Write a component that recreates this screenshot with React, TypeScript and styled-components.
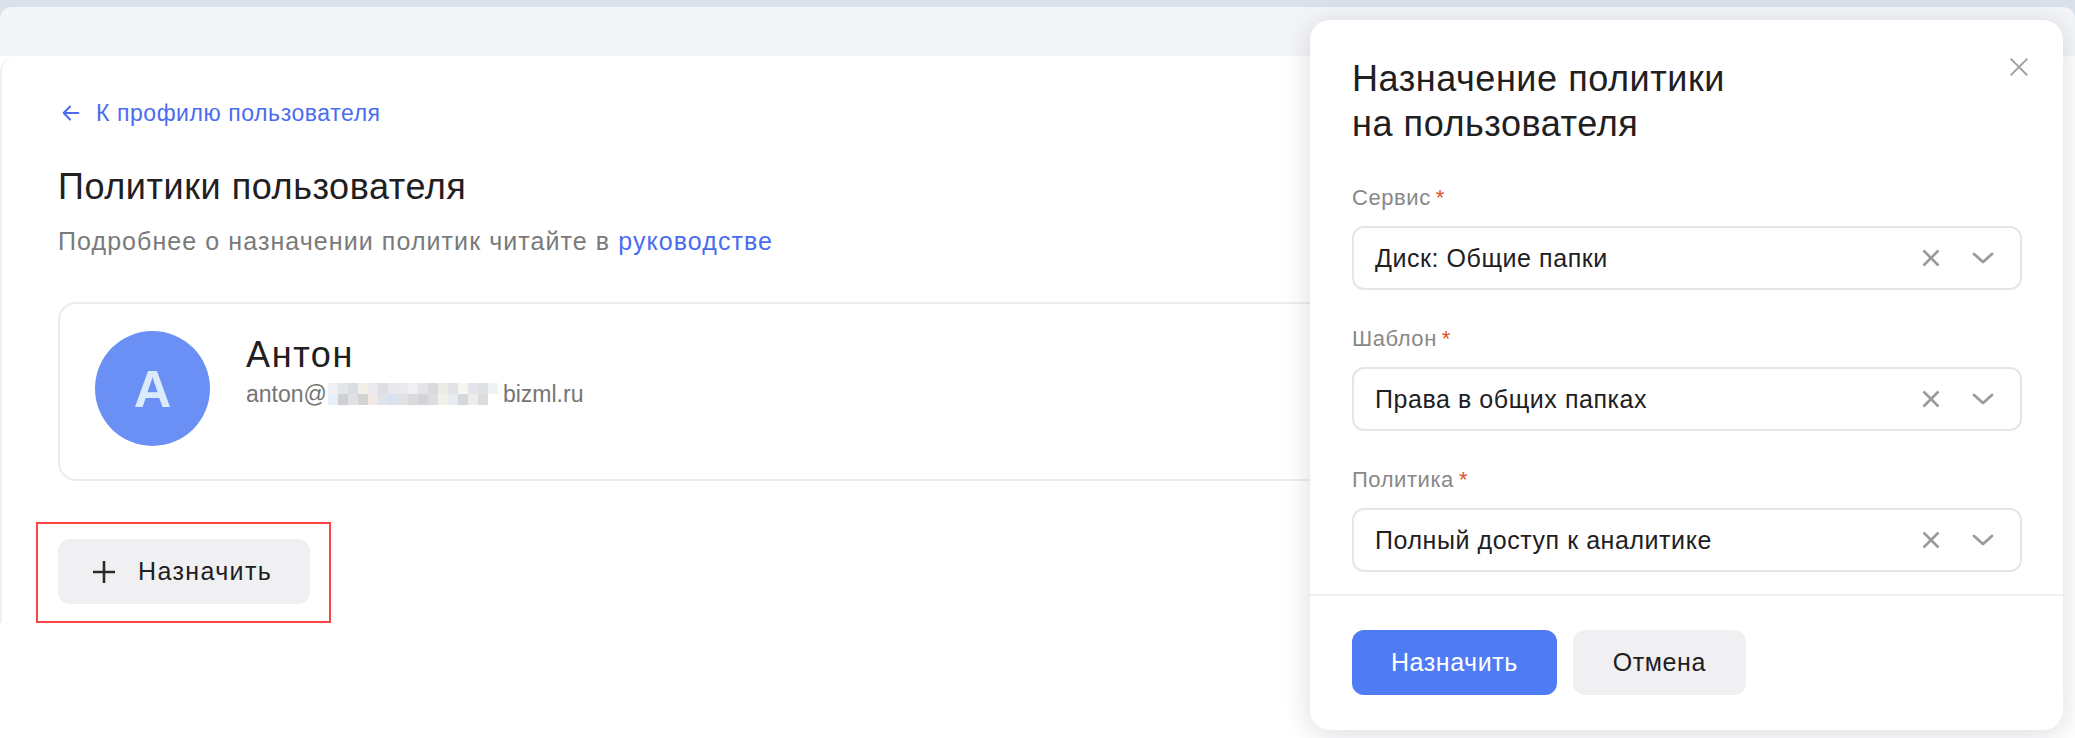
import React from "react";
import styled, { createGlobalStyle } from "styled-components";

const GlobalStyle = createGlobalStyle`
  html, body {
    margin: 0;
    padding: 0;
    background: #ffffff;
  }
  body {
    font-family: "Liberation Sans", Arial, sans-serif;
    letter-spacing: 0.035em;
    color: #21201f;
  }
  button {
    font-family: inherit;
    letter-spacing: inherit;
    cursor: pointer;
  }
`;

const Page = styled.div`
  position: relative;
  width: 2075px;
  height: 738px;
  overflow: hidden;
  background: #dbe1ea;
`;

const Shell = styled.div`
  margin-top: 7px;
  height: 731px;
  border-radius: 12px 12px 0 0;
  background: linear-gradient(#f4f5f8 0, #f4f5f8 49px, #ffffff 49px);
  padding-top: 49px;
  box-sizing: border-box;
`;

const Card = styled.div`
  height: 567px;
  background: #ffffff;
  border-radius: 16px 16px 0 0;
  border-left: 2px solid #f0f0f2;
  box-sizing: border-box;
  padding: 43px 0 0 56px;
  display: flex;
  flex-direction: column;
  align-items: flex-start;
`;

const BackLink = styled.a`
  display: flex;
  align-items: center;
  gap: 14px;
  color: #4a6cf0;
  font-size: 23px;
  line-height: 28px;
  text-decoration: none;
  margin-left: 2px;
`;

const Title = styled.h1`
  margin: 40px 0 0;
  font-size: 36px;
  line-height: 40px;
  font-weight: 400;
  color: #21201f;
`;

const Subtitle = styled.p`
  margin: 18px 0 0;
  font-size: 25px;
  line-height: 32px;
  letter-spacing: 0.043em;
  color: #7a7a7a;
`;

const Link = styled.span`
  color: #4a6cf0;
`;

const UserCard = styled.div`
  margin-top: 45px;
  width: 1400px;
  height: 182px;
  box-sizing: border-box;
  border: 2px solid #ececee;
  border-radius: 18px;
  display: flex;
  align-items: flex-start;
  padding: 27px 0 0 35px;
  gap: 36px;
`;

const Avatar = styled.div`
  width: 115px;
  height: 115px;
  border-radius: 50%;
  background: #6a8ff5;
  color: #dcebfb;
  font-weight: 700;
  font-size: 52px;
  letter-spacing: 0;
  display: flex;
  align-items: center;
  justify-content: center;
`;

const UserInfo = styled.div`
  display: flex;
  flex-direction: column;
  padding-top: 4px;
`;

const Name = styled.div`
  font-size: 36px;
  line-height: 40px;
  letter-spacing: 0.045em;
  color: #21201f;
`;

const Email = styled.div`
  display: flex;
  align-items: center;
  margin-top: 4px;
  font-size: 23px;
  line-height: 30px;
  letter-spacing: 0;
  color: #757575;
`;

const Mosaic = styled.span`
  display: grid;
  grid-template-columns: repeat(17, 10px);
  grid-template-rows: repeat(2, 11px);
  margin: 0 5px 0 1px;
`;

const Tile = styled.span<{ $c: string }>`
  background: ${(p) => p.$c};
`;

const Highlight = styled.div`
  margin: 41px 0 0 -22px;
  border: 2px solid #ff4444;
  padding: 15px 19px 17px 20px;
`;

const GhostButton = styled.button`
  display: flex;
  align-items: center;
  gap: 22px;
  height: 65px;
  padding: 0 38px 0 34px;
  border: none;
  border-radius: 12px;
  background: #f0f0f3;
  color: #21201f;
  font-size: 25px;
  letter-spacing: 0.055em;
`;

const Drawer = styled.div`
  position: absolute;
  top: 20px;
  right: 12px;
  width: 753px;
  height: 710px;
  background: #ffffff;
  border-radius: 20px;
  box-shadow: 0 4px 28px rgba(30, 40, 60, 0.16);
  display: flex;
  flex-direction: column;
`;

const DrawerBody = styled.div`
  flex: 1;
  padding: 36px 0 0 42px;
  position: relative;
`;

const DrawerTitle = styled.h2`
  margin: 0;
  font-size: 36px;
  line-height: 45px;
  font-weight: 400;
  color: #21201f;
`;

const CloseButton = styled.button`
  position: absolute;
  top: 27px;
  right: 24px;
  width: 40px;
  height: 40px;
  border: none;
  background: transparent;
  display: flex;
  align-items: center;
  justify-content: center;
  padding: 0;
`;

const Field = styled.div`
  margin-top: 39px;
  display: flex;
  flex-direction: column;
  width: 670px;
  & + & {
    margin-top: 36px;
  }
`;

const Label = styled.label`
  font-size: 22px;
  line-height: 26px;
  color: #888888;
`;

const Star = styled.span`
  color: #e0522c;
  margin-left: 5px;
`;

const Select = styled.div`
  margin-top: 15px;
  height: 64px;
  box-sizing: border-box;
  border: 2px solid #e6e6e8;
  border-radius: 12px;
  display: flex;
  align-items: center;
  padding: 0 26px 0 21px;
  font-size: 25px;
  color: #21201f;
`;

const SelectValue = styled.span`
  flex: 1;
`;

const SelectIcons = styled.span`
  display: flex;
  align-items: center;
  gap: 32px;
`;

const DrawerFooter = styled.div`
  border-top: 2px solid #efeff1;
  height: 136px;
  box-sizing: border-box;
  padding: 34px 0 0 42px;
  display: flex;
  gap: 16px;
  align-items: flex-start;
`;

const ActionButton = styled.button<{ $primary?: boolean }>`
  height: 65px;
  border: none;
  border-radius: 12px;
  padding: 0 ${(p) => (p.$primary ? "39px" : "40px")};
  background: ${(p) => (p.$primary ? "#4f7bf5" : "#f0f0f3")};
  color: ${(p) => (p.$primary ? "#ffffff" : "#21201f")};
  font-size: 25px;
`;

const ArrowLeft = () => (
  <svg width="22" height="22" viewBox="0 0 24 24" fill="none">
    <path d="M20 12H5M11 5l-7 7 7 7" stroke="#4a6cf0" strokeWidth="2.2" strokeLinecap="round" strokeLinejoin="round" />
  </svg>
);

const PlusIcon = () => (
  <svg width="24" height="24" viewBox="0 0 24 24" fill="none">
    <path d="M12 1v22M1 12h22" stroke="#2a2a2a" strokeWidth="2.6" />
  </svg>
);

const CrossIcon = ({ size = 18, color = "#9a9a9a", width = 2.6 }: { size?: number; color?: string; width?: number }) => (
  <svg width={size} height={size} viewBox="0 0 18 18" fill="none">
    <path d="M1.5 1.5l15 15M16.5 1.5l-15 15" stroke={color} strokeWidth={width} />
  </svg>
);

const Chevron = () => (
  <svg width="22" height="12" viewBox="0 0 22 12" fill="none">
    <path d="M2 2l9 8 9-8" stroke="#9a9a9a" strokeWidth="2.8" strokeLinecap="round" strokeLinejoin="round" />
  </svg>
);

const mosaic = [
  "#eef0f4", "#e4e5ea", "#dcdde2", "#f1efe6", "#e9e9ee", "#dedfe4", "#e8e9ee", "#eaeaee", "#f0f0f2",
  "#e3e3e8", "#d9dade", "#ecebe6", "#e2e3e8", "#f7f6ef", "#e4e5ea", "#dfe0e4", "#f0f1f4",
  "#e6eef8", "#cfd0d4", "#e0e1e4", "#d4d3d2", "#f3e9e4", "#dfe3ea", "#d8e2ee", "#e1e2e5", "#d9dadc",
  "#d3d4d8", "#dcdde0", "#f1f1ea", "#e7eaee", "#d6d7da", "#ececec", "#dcdcde", "#ffffff",
];

const fields = [
  { label: "Сервис", value: "Диск: Общие папки" },
  { label: "Шаблон", value: "Права в общих папках" },
  { label: "Политика", value: "Полный доступ к аналитике" },
];

export default function App() {
  return (
    <>
      <GlobalStyle />
      <Page>
        <Shell>
          <Card>
            <BackLink>
              <ArrowLeft />
              К профилю пользователя
            </BackLink>
            <Title>Политики пользователя</Title>
            <Subtitle>
              Подробнее о назначении политик читайте в <Link>руководстве</Link>
            </Subtitle>
            <UserCard>
              <Avatar>A</Avatar>
              <UserInfo>
                <Name>Антон</Name>
                <Email>
                  anton@
                  <Mosaic>
                    {mosaic.map((c, i) => (
                      <Tile key={i} $c={c} />
                    ))}
                  </Mosaic>
                  bizml.ru
                </Email>
              </UserInfo>
            </UserCard>
            <Highlight>
              <GhostButton>
                <PlusIcon />
                Назначить
              </GhostButton>
            </Highlight>
          </Card>
        </Shell>

        <Drawer>
          <DrawerBody>
            <DrawerTitle>
              Назначение политики
              <br />
              на пользователя
            </DrawerTitle>
            <CloseButton>
              <CrossIcon size={20} color="#a0a0a0" width={1.8} />
            </CloseButton>
            {fields.map((f) => (
              <Field key={f.label}>
                <Label>
                  {f.label}
                  <Star>*</Star>
                </Label>
                <Select>
                  <SelectValue>{f.value}</SelectValue>
                  <SelectIcons>
                    <CrossIcon />
                    <Chevron />
                  </SelectIcons>
                </Select>
              </Field>
            ))}
          </DrawerBody>
          <DrawerFooter>
            <ActionButton $primary>Назначить</ActionButton>
            <ActionButton>Отмена</ActionButton>
          </DrawerFooter>
        </Drawer>
      </Page>
    </>
  );
}
